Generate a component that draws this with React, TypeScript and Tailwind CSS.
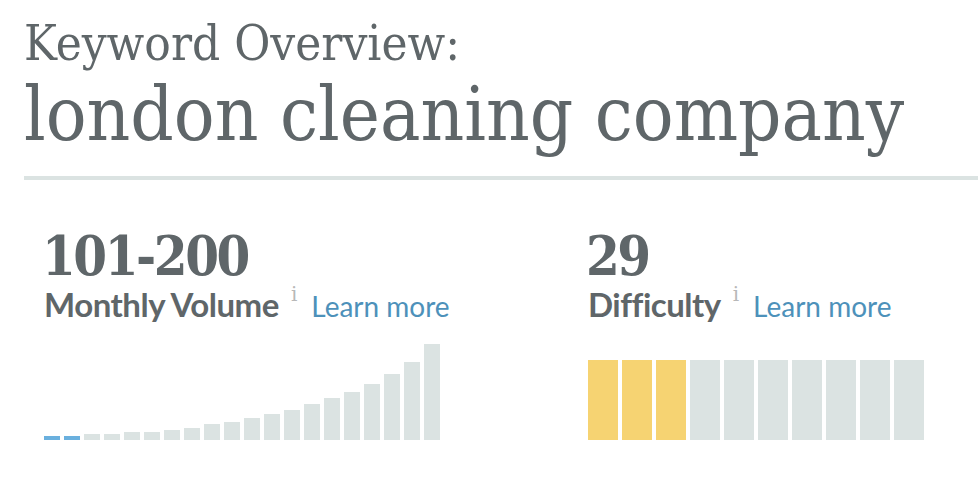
import React from 'react';

const volumeBars = [4, 4, 6, 6, 8, 8, 10, 12, 16, 18, 22, 26, 30, 36, 42, 48, 56, 66, 78, 96];
const difficultyScore = 3;

function InfoMark() {
  return (
    <span className="self-start ml-3 text-[20px] leading-[20px] text-[#b8b8b8] font-['DejaVu_Serif',serif]">i</span>
  );
}

function Metric({ value, label }: { value: string; label: string }) {
  return (
    <>
      <div className="-ml-[2px] text-[54px] leading-[54px] font-bold font-['DejaVu_Serif',serif] [font-stretch:condensed] tracking-[-0.045em]">
        {value}
      </div>
      <div className="flex items-baseline mt-px h-10">
        <span className="text-[33px] leading-10 font-bold tracking-[-0.015em]">{label}</span>
        <InfoMark />
        <a className="ml-[14px] text-[28px] leading-10 text-[#4d91ba]">Learn more</a>
      </div>
    </>
  );
}

export default function App() {
  return (
    <div className="w-[978px] h-[478px] bg-white overflow-hidden text-[#5f6669]">
      <header className="pl-6 pt-4 font-['DejaVu_Serif',serif] [font-stretch:condensed]">
        <h1 className="text-[49px] leading-[56px]">Keyword Overview:</h1>
        <h2 className="text-[75.5px] leading-[84px]">london cleaning company</h2>
      </header>

      <div className="ml-6 mt-5 h-1 bg-[#dbe3e2]" />

      <section className="grid grid-cols-[544px_1fr] pl-[44px] pt-[49px] font-['Lato',sans-serif]">
        {/* Monthly volume */}
        <div className="flex flex-col">
          <Metric value="101-200" label="Monthly Volume" />
          <div className="flex items-end gap-1 h-[96px] mt-5">
            {volumeBars.map((h, i) => (
              <div
                key={i}
                className={`w-4 ${i < 2 ? 'bg-[#6ab0de]' : 'bg-[#dbe3e2]'}`}
                style={{ height: h }}
              />
            ))}
          </div>
        </div>

        {/* Difficulty */}
        <div className="flex flex-col">
          <Metric value="29" label="Difficulty" />
          <div className="flex items-end gap-1 h-[96px] mt-5">
            {Array.from({ length: 10 }).map((_, i) => (
              <div
                key={i}
                className={`w-[30px] h-20 ${i < difficultyScore ? 'bg-[#f6d372]' : 'bg-[#dbe3e2]'}`}
              />
            ))}
          </div>
        </div>
      </section>
    </div>
  );
}
